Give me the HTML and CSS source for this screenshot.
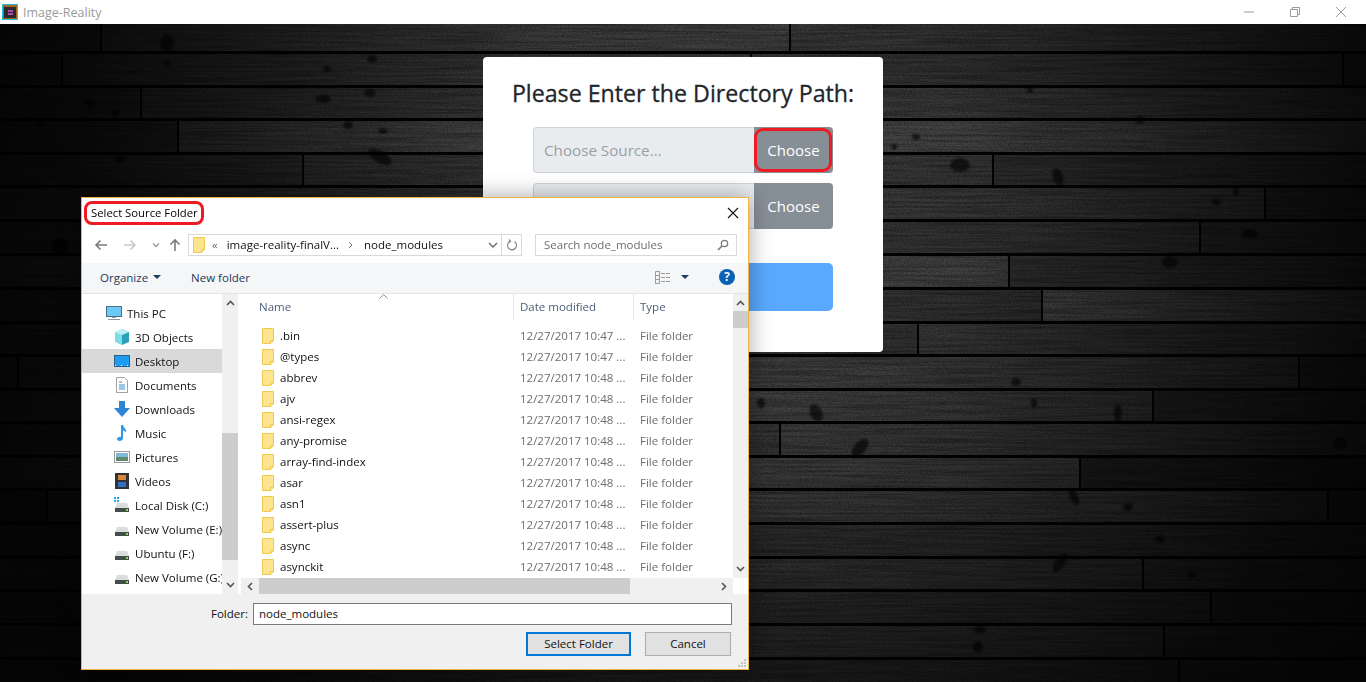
FILE: index.html

```html
<!DOCTYPE html>
<html lang="en">

<head>
    <meta charset="UTF-8">
    <title>Image-Reality</title>
    <link rel="stylesheet" href="styles.css">
</head>

<body>
    <svg class="sprites" width="0" height="0">
        <symbol id="folder" viewBox="0 0 12 16">
            <path d="M.5 .5H11.5V12.5H8.5V15.5H.5Z" fill="#fde58f" stroke="#efc84e" />
            <path d="M8.5 15.5V12.5H11.5Z" fill="#fff3c4" stroke="#efc84e" />
        </symbol>
        <symbol id="drive" viewBox="0 0 16 16">
            <path d="M3 6H13L15 11H1Z" fill="#d8dcdc" />
            <rect x="1" y="11" width="14" height="4" fill="#454c4c" />
            <rect x="12" y="12" width="2" height="2" fill="#7fe05a" />
        </symbol>
    </svg>

    <header class="titlebar">
        <svg class="app-icon" width="16" height="16" viewBox="0 0 16 16">
            <rect width="16" height="16" fill="#1fc0e0" />
            <rect x="1" y="1" width="14" height="14" fill="#a9641c" />
            <rect x="2" y="3" width="12" height="11" fill="#2a2a30" />
            <path d="M6 7H11M6 10H11" stroke="#ee55d8" stroke-width="1.4" />
        </svg>
        <span class="app-name">Image-Reality</span>
        <div class="win-controls">
            <svg width="12" height="12" viewBox="0 0 12 12">
                <path d="M1 6H11" stroke="#999" />
            </svg>
            <svg width="12" height="12" viewBox="0 0 12 12">
                <path d="M1.5 3.5H8.5V10.5H1.5ZM3.5 3.5V1.5H10.5V8.5H8.5" fill="none" stroke="#999" />
            </svg>
            <svg width="12" height="12" viewBox="0 0 12 12">
                <path d="M1 1L11 11M11 1L1 11" stroke="#999" />
            </svg>
        </div>
    </header>

    <main class="stage">
        <!-- wood floor -->
        <svg class="floor" width="1366" height="658" viewBox="0 0 1366 658">
            <defs>
                <filter id="grain" x="0" y="0" width="100%" height="100%">
                    <feTurbulence type="fractalNoise" baseFrequency="0.012 0.45" numOctaves="4" seed="7" />
                    <feColorMatrix values="0 0 0 0 0  0 0 0 0 0  0 0 0 0 0  1.6 0 0 0 -0.5" />
                </filter>
                <filter id="speck" x="0" y="0" width="100%" height="100%">
                    <feTurbulence type="fractalNoise" baseFrequency="0.7" numOctaves="2" seed="3" />
                    <feColorMatrix values="0 0 0 0 0  0 0 0 0 0  0 0 0 0 0  1.4 0 0 0 -0.5" />
                </filter>
                <filter id="soft" x="-30%" y="-30%" width="160%" height="160%">
                    <feGaussianBlur stdDeviation="1" />
                </filter>
                <radialGradient id="light" gradientUnits="userSpaceOnUse" cx="730" cy="170" r="770">
                    <stop offset="0" stop-color="#000" stop-opacity="0" />
                    <stop offset=".3" stop-color="#000" stop-opacity=".12" />
                    <stop offset=".62" stop-color="#000" stop-opacity=".55" />
                    <stop offset=".85" stop-color="#000" stop-opacity=".82" />
                    <stop offset="1" stop-color="#000" stop-opacity=".9" />
                </radialGradient>
            </defs>
            <rect width="1366" height="658" fill="#040404" />
            <g opacity=".85">
                <rect y="0" width="100" height="27" fill="#484848" />
                <rect x="102" y="0" width="687" height="27" fill="#565656" />
                <rect x="791" y="0" width="575" height="27" fill="#4c4c4c" />
                <rect y="30" width="61" height="31" fill="#404040" />
                <rect x="63" y="30" width="687" height="31" fill="#4e4e4e" />
                <rect x="752" y="30" width="590" height="31" fill="#484848" />
                <rect x="1344" y="30" width="22" height="31" fill="#3c3c3c" />
                <rect y="64" width="140" height="30" fill="#444" />
                <rect x="142" y="64" width="1224" height="30" fill="#505050" />
                <rect y="97" width="177" height="31" fill="#404040" />
                <rect x="179" y="97" width="1187" height="31" fill="#606060" />
                <rect y="131" width="302" height="30" fill="#484848" />
                <rect x="304" y="131" width="688" height="30" fill="#4e4e4e" />
                <rect x="994" y="131" width="372" height="30" fill="#444" />
                <rect y="164" width="1264" height="31" fill="#505050" />
                <rect x="1266" y="164" width="100" height="31" fill="#3c3c3c" />
                <rect y="198" width="1199" height="31" fill="#4a4a4a" />
                <rect x="1201" y="198" width="165" height="31" fill="#404040" />
                <rect y="232" width="1008" height="31" fill="#5c5c5c" />
                <rect x="1010" y="232" width="356" height="31" fill="#484848" />
                <rect y="266" width="1041" height="31" fill="#484848" />
                <rect x="1043" y="266" width="323" height="31" fill="#646464" />
                <rect y="300" width="917" height="30" fill="#484848" />
                <rect x="919" y="300" width="447" height="30" fill="#505050" />
                <rect y="333" width="17" height="31" fill="#505050" />
                <rect x="19" y="333" width="1279" height="31" fill="#565656" />
                <rect x="1300" y="333" width="66" height="31" fill="#404040" />
                <rect y="367" width="1152" height="30" fill="#585858" />
                <rect x="1154" y="367" width="212" height="30" fill="#404040" />
                <rect y="400" width="779" height="31" fill="#505050" />
                <rect x="781" y="400" width="585" height="31" fill="#585858" />
                <rect y="434" width="1079" height="30" fill="#5e5e5e" />
                <rect x="1081" y="434" width="285" height="30" fill="#3a3a3a" />
                <rect y="467" width="46" height="31" fill="#444" />
                <rect x="48" y="467" width="1279" height="31" fill="#5e5e5e" />
                <rect x="1329" y="467" width="37" height="31" fill="#404040" />
                <rect y="501" width="1366" height="31" fill="#505050" />
                <rect y="535" width="1142" height="30" fill="#585858" />
                <rect x="1144" y="535" width="222" height="30" fill="#505050" />
                <rect y="568" width="1210" height="31" fill="#505050" />
                <rect x="1212" y="568" width="154" height="31" fill="#484848" />
                <rect y="602" width="1163" height="31" fill="#565656" />
                <rect x="1165" y="602" width="201" height="31" fill="#4c4c4c" />
                <rect y="636" width="1178" height="22" fill="#4c4c4c" />
                <rect x="1180" y="636" width="186" height="22" fill="#484848" />
            </g>
            <rect width="1366" height="658" filter="url(#grain)" opacity=".4" />
            <rect width="1366" height="658" filter="url(#speck)" opacity=".5" />
            <g fill="#000" opacity=".6" filter="url(#soft)">
                <ellipse cx="167" cy="19" rx="7" ry="9" />
                <ellipse cx="372" cy="35" rx="5" ry="4" />
                <ellipse cx="327" cy="45" rx="4" ry="3" />
                <ellipse cx="167" cy="39" rx="3" ry="3" />
                <ellipse cx="323" cy="75" rx="8" ry="4" />
                <ellipse cx="370" cy="69" rx="6" ry="4" />
                <ellipse cx="90" cy="79" rx="6" ry="4" />
                <ellipse cx="115" cy="89" rx="4" ry="4" />
                <ellipse cx="348" cy="101" rx="5" ry="4" />
                <ellipse cx="383" cy="107" rx="5" ry="3" />
                <ellipse cx="380" cy="133" rx="13" ry="6" transform="rotate(30 380 133)" />
                <ellipse cx="120" cy="135" rx="6" ry="4" />
                <ellipse cx="960" cy="141" rx="10" ry="7" />
                <ellipse cx="1058" cy="153" rx="5" ry="9" transform="rotate(-20 1058 153)" />
                <ellipse cx="916" cy="113" rx="4" ry="3" />
                <ellipse cx="894" cy="123" rx="3" ry="3" />
                <ellipse cx="1030" cy="66" rx="3" ry="3" />
                <ellipse cx="1140" cy="96" rx="4" ry="4" />
                <ellipse cx="1250" cy="210" rx="8" ry="5" />
                <ellipse cx="1216" cy="178" rx="5" ry="3" />
                <ellipse cx="1236" cy="168" rx="3" ry="4" />
                <ellipse cx="1060" cy="539" rx="5" ry="11" transform="rotate(35 1060 539)" />
                <ellipse cx="761" cy="379" rx="4" ry="5" />
                <ellipse cx="816" cy="389" rx="6" ry="9" transform="rotate(-25 816 389)" />
                <ellipse cx="860" cy="424" rx="6" ry="11" transform="rotate(40 860 424)" />
                <ellipse cx="1016" cy="358" rx="5" ry="4" />
                <ellipse cx="1074" cy="473" rx="4" ry="9" transform="rotate(-25 1074 473)" />
                <ellipse cx="1128" cy="483" rx="5" ry="4" />
                <ellipse cx="980" cy="606" rx="6" ry="4" />
                <ellipse cx="978" cy="623" rx="5" ry="6" />
                <ellipse cx="1192" cy="551" rx="5" ry="3" />
                <ellipse cx="1340" cy="419" rx="7" ry="6" />
                <ellipse cx="1118" cy="389" rx="4" ry="9" />
                <ellipse cx="1034" cy="379" rx="3" ry="5" />
                <ellipse cx="1160" cy="515" rx="5" ry="4" />
                <ellipse cx="60" cy="222" rx="8" ry="9" />
                <ellipse cx="42" cy="100" rx="4" ry="3" />
                <ellipse cx="1170" cy="238" rx="8" ry="6" />
            </g>
            <rect width="1366" height="658" fill="url(#light)" />
        </svg>

        <section class="card">
            <h1 class="card-title">Please Enter the Directory Path:</h1>
            <div class="input-group">
                <div class="path-box">Choose Source...</div>
                <div class="choose-btn marked">Choose</div>
            </div>
            <div class="input-group">
                <div class="path-box"></div>
                <div class="choose-btn">Choose</div>
            </div>
            <div class="start-btn"></div>
        </section>

        <section class="dialog">
            <div class="dlg-title">
                <span class="dlg-caption">Select Source Folder</span>
                <svg class="dlg-close" width="12" height="12" viewBox="0 0 12 12">
                    <path d="M1 1L11 11M11 1L1 11" stroke="#111" stroke-width="1.1" />
                </svg>
            </div>

            <div class="dlg-nav">
                <div class="nav-arrows">
                    <svg width="14" height="12" viewBox="0 0 14 12">
                        <path d="M13 6H2M6.5 1.5L2 6L6.5 10.5" fill="none" stroke="#7b7b7b" stroke-width="1.6" />
                    </svg>
                    <svg width="14" height="12" viewBox="0 0 14 12">
                        <path d="M1 6H12M7.5 1.5L12 6L7.5 10.5" fill="none" stroke="#c9c9c9" stroke-width="1.6" />
                    </svg>
                    <svg class="history" width="8" height="6" viewBox="0 0 8 6">
                        <path d="M1 1.5L4 4.5L7 1.5" fill="none" stroke="#9a9a9a" stroke-width="1.3" />
                    </svg>
                    <svg class="up" width="12" height="14" viewBox="0 0 12 14">
                        <path d="M6 13V2M1.5 6.5L6 2L10.5 6.5" fill="none" stroke="#7b7b7b" stroke-width="1.6" />
                    </svg>
                </div>
                <div class="address">
                    <svg class="addr-folder" width="12" height="16"><use href="#folder" /></svg>
                    <span class="addr-more">«</span>
                    <span class="addr-part">image-reality-finalV...</span>
                    <svg class="addr-sep" width="5" height="8" viewBox="0 0 5 8">
                        <path d="M1 1L4 4L1 7" fill="none" stroke="#777" />
                    </svg>
                    <span class="addr-part addr-last">node_modules</span>
                    <svg class="addr-drop" width="10" height="6" viewBox="0 0 10 6">
                        <path d="M1 1L5 5L9 1" fill="none" stroke="#666" stroke-width="1.3" />
                    </svg>
                    <div class="addr-refresh">
                        <svg width="12" height="12" viewBox="0 0 12 12">
                            <path d="M4.2 2.2A4.5 4.5 0 1 0 8.5 2.6M3 .5L4.6 2.4L2.6 3.8" fill="none" stroke="#888" stroke-width="1.2" />
                        </svg>
                    </div>
                </div>
                <div class="search">
                    <span class="search-text">Search node_modules</span>
                    <svg width="12" height="12" viewBox="0 0 12 12">
                        <circle cx="7.5" cy="4.5" r="3.2" fill="none" stroke="#777" stroke-width="1.2" />
                        <path d="M5 7L1 11" stroke="#777" stroke-width="1.6" />
                    </svg>
                </div>
            </div>

            <div class="dlg-tools">
                <span class="tool">Organize<i class="caret"></i></span>
                <span class="tool">New folder</span>
                <svg class="views" width="16" height="13" viewBox="0 0 16 13">
                    <path d="M.5 .5H4.5V12.5H.5ZM.5 4.5H4.5M.5 8.5H4.5" fill="none" stroke="#9a9a9a" />
                    <path d="M6 2.5H16M6 6.5H16M6 10.5H16" stroke="#9a9a9a" stroke-dasharray="4 1" />
                </svg>
                <i class="caret views-caret"></i>
                <span class="help">?</span>
            </div>

            <div class="dlg-panes">
                <nav class="tree">
                    <div class="tree-row top">
                        <svg width="16" height="16" viewBox="0 0 16 16">
                            <rect x=".5" y="1.5" width="15" height="10" fill="#6cc8f5" stroke="#4c6f88" />
                            <path d="M6 12.5H10M2 14.5H14" stroke="#8a97a3" />
                        </svg>
                        This PC
                    </div>
                    <div class="tree-row">
                        <svg width="16" height="16" viewBox="0 0 16 16">
                            <path d="M8 0L15 3V13L8 16Z" fill="#2aa3b8" />
                            <path d="M8 0L1 3V13L8 16Z" fill="#7fdde8" />
                            <path d="M1 3L8 6L15 3L8 0Z" fill="#bdf0f5" />
                        </svg>
                        3D Objects
                    </div>
                    <div class="tree-row selected">
                        <svg width="16" height="16" viewBox="0 0 16 16">
                            <rect x=".5" y="2.5" width="15" height="11" fill="#1e9df0" stroke="#2a5f8a" />
                            <path d="M1 12.5H15" stroke="#fff" stroke-dasharray="1 5" />
                        </svg>
                        Desktop
                    </div>
                    <div class="tree-row">
                        <svg width="16" height="16" viewBox="0 0 16 16">
                            <path d="M2.5 .5H10.5L13.5 3.5V15.5H2.5Z" fill="#fff" stroke="#a2a2a2" />
                            <path d="M5 5H8M5 8H11M5 10H11M5 12H11" stroke="#2f8fd0" />
                        </svg>
                        Documents
                    </div>
                    <div class="tree-row">
                        <svg width="16" height="16" viewBox="0 0 16 16">
                            <path d="M5 0H11V7H16L8 16L0 7H5Z" fill="#2f84d6" />
                        </svg>
                        Downloads
                    </div>
                    <div class="tree-row">
                        <svg width="16" height="16" viewBox="0 0 16 16">
                            <path d="M7 0H9C9.500 3 13 4 12 8C11.500 6.500 10.500 6 9 5.500V13C9 15 7.500 16 5.500 16C4 16 3 15 3 14C3 12.500 5 11.300 7 11.800Z" fill="#2f9be8" />
                        </svg>
                        Music
                    </div>
                    <div class="tree-row">
                        <svg width="16" height="16" viewBox="0 0 16 16">
                            <rect x=".5" y="2.5" width="15" height="11" fill="#fff" stroke="#9a9a9a" />
                            <rect x="2" y="4" width="12" height="4" fill="#7fb8d8" />
                            <rect x="2" y="8" width="12" height="4" fill="#5c8a6a" />
                        </svg>
                        Pictures
                    </div>
                    <div class="tree-row">
                        <svg width="16" height="16" viewBox="0 0 16 16">
                            <rect x="1" y="0" width="14" height="16" fill="#333" />
                            <rect x="4" y="2" width="8" height="5" fill="#d8863c" />
                            <rect x="4" y="9" width="8" height="5" fill="#2f6fc8" />
                        </svg>
                        Videos
                    </div>
                    <div class="tree-row">
                        <svg width="16" height="16" viewBox="0 0 16 16">
                            <use href="#drive" />
                            <path d="M0 0h2v2h-2zM3 0h2v2h-2zM0 3h2v2h-2zM3 3h2v2h-2z" fill="#1fa8e8" />
                        </svg>
                        Local Disk (C:)
                    </div>
                    <div class="tree-row">
                        <svg width="16" height="16"><use href="#drive" /></svg>
                        New Volume (E:)
                    </div>
                    <div class="tree-row">
                        <svg width="16" height="16"><use href="#drive" /></svg>
                        Ubuntu (F:)
                    </div>
                    <div class="tree-row">
                        <svg width="16" height="16"><use href="#drive" /></svg>
                        New Volume (G:)
                    </div>
                </nav>

                <div class="tree-scroll">
                    <svg class="arrow" width="9" height="6" viewBox="0 0 9 6">
                        <path d="M1 5L4.500 1.500L8 5" fill="none" stroke="#555" stroke-width="1.6" />
                    </svg>
                    <div class="tree-track"><div class="tree-thumb"></div></div>
                    <svg class="arrow" width="9" height="6" viewBox="0 0 9 6">
                        <path d="M1 1L4.500 4.500L8 1" fill="none" stroke="#555" stroke-width="1.6" />
                    </svg>
                </div>

                <div class="files">
                    <div class="files-main">
                        <div class="file-head">
                            <span class="col-name">Name</span>
                            <span class="col-date">Date modified</span>
                            <span class="col-type">Type</span>
                            <svg class="sort" width="9" height="5" viewBox="0 0 9 5">
                                <path d="M.5 4.500L4.500 .5L8.500 4.500" fill="none" stroke="#888" />
                            </svg>
                        </div>
                        <div class="file-list">
                            <div class="file-row"><span class="col-name"><svg width="12" height="16"><use href="#folder" /></svg>.bin</span><span class="col-date">12/27/2017 10:47 ...</span><span class="col-type">File folder</span></div>
                            <div class="file-row"><span class="col-name"><svg width="12" height="16"><use href="#folder" /></svg>@types</span><span class="col-date">12/27/2017 10:47 ...</span><span class="col-type">File folder</span></div>
                            <div class="file-row"><span class="col-name"><svg width="12" height="16"><use href="#folder" /></svg>abbrev</span><span class="col-date">12/27/2017 10:48 ...</span><span class="col-type">File folder</span></div>
                            <div class="file-row"><span class="col-name"><svg width="12" height="16"><use href="#folder" /></svg>ajv</span><span class="col-date">12/27/2017 10:48 ...</span><span class="col-type">File folder</span></div>
                            <div class="file-row"><span class="col-name"><svg width="12" height="16"><use href="#folder" /></svg>ansi-regex</span><span class="col-date">12/27/2017 10:48 ...</span><span class="col-type">File folder</span></div>
                            <div class="file-row"><span class="col-name"><svg width="12" height="16"><use href="#folder" /></svg>any-promise</span><span class="col-date">12/27/2017 10:48 ...</span><span class="col-type">File folder</span></div>
                            <div class="file-row"><span class="col-name"><svg width="12" height="16"><use href="#folder" /></svg>array-find-index</span><span class="col-date">12/27/2017 10:48 ...</span><span class="col-type">File folder</span></div>
                            <div class="file-row"><span class="col-name"><svg width="12" height="16"><use href="#folder" /></svg>asar</span><span class="col-date">12/27/2017 10:48 ...</span><span class="col-type">File folder</span></div>
                            <div class="file-row"><span class="col-name"><svg width="12" height="16"><use href="#folder" /></svg>asn1</span><span class="col-date">12/27/2017 10:48 ...</span><span class="col-type">File folder</span></div>
                            <div class="file-row"><span class="col-name"><svg width="12" height="16"><use href="#folder" /></svg>assert-plus</span><span class="col-date">12/27/2017 10:48 ...</span><span class="col-type">File folder</span></div>
                            <div class="file-row"><span class="col-name"><svg width="12" height="16"><use href="#folder" /></svg>async</span><span class="col-date">12/27/2017 10:48 ...</span><span class="col-type">File folder</span></div>
                            <div class="file-row"><span class="col-name"><svg width="12" height="16"><use href="#folder" /></svg>asynckit</span><span class="col-date">12/27/2017 10:48 ...</span><span class="col-type">File folder</span></div>
                        </div>
                    </div>
                    <div class="vscroll">
                        <svg class="arrow" width="9" height="6" viewBox="0 0 9 6">
                            <path d="M1 5L4.500 1.500L8 5" fill="none" stroke="#555" stroke-width="1.6" />
                        </svg>
                        <div class="vtrack"><div class="vthumb"></div></div>
                        <svg class="arrow" width="9" height="6" viewBox="0 0 9 6">
                            <path d="M1 1L4.500 4.500L8 1" fill="none" stroke="#555" stroke-width="1.6" />
                        </svg>
                    </div>
                    <div class="hscroll">
                        <svg class="harrow" width="6" height="9" viewBox="0 0 6 9">
                            <path d="M5 1L1.500 4.500L5 8" fill="none" stroke="#555" stroke-width="1.6" />
                        </svg>
                        <div class="hthumb"></div>
                        <svg class="harrow" width="6" height="9" viewBox="0 0 6 9">
                            <path d="M1 1L4.500 4.500L1 8" fill="none" stroke="#555" stroke-width="1.6" />
                        </svg>
                    </div>
                </div>
            </div>

            <div class="dlg-foot">
                <div class="folder-row">
                    <span class="folder-label">Folder:</span>
                    <div class="folder-input">node_modules</div>
                </div>
                <div class="foot-buttons">
                    <div class="win-btn default">Select Folder</div>
                    <div class="win-btn">Cancel</div>
                </div>
                <svg class="grip" width="10" height="9" viewBox="0 0 10 9">
                    <path d="M7 0h2v2h-2zM4 3h2v2h-2zM7 3h2v2h-2zM1 6h2v2h-2zM4 6h2v2h-2zM7 6h2v2h-2z" fill="#c4c4c4" />
                </svg>
            </div>
        </section>
    </main>
</body>

</html>
```

FILE: styles.css

```css
* {
    margin: 0;
    padding: 0;
    box-sizing: border-box;
}

html,
body {
    height: 100%;
}

body {
    overflow: hidden;
    display: flex;
    flex-direction: column;
    background: #0a0a0a;
    font-family: "Open Sans", "Noto Sans", sans-serif;
}

.sprites {
    position: absolute;
}

/* app window */
.titlebar {
    display: flex;
    align-items: center;
    height: 24px;
    padding-left: 2px;
    background: #fff;
}

.app-name {
    margin-left: 5px;
    font-size: 12.5px;
    color: #9a9a9a;
}

.win-controls {
    display: flex;
    gap: 34px;
    margin-left: auto;
    padding-right: 19px;
}

.stage {
    position: relative;
    flex: 1;
    display: flex;
    justify-content: center;
    align-items: flex-start;
    overflow: hidden;
}

.floor {
    position: absolute;
    left: 0;
    top: 0;
}

/* bootstrap looking card */
.card {
    position: relative;
    display: flex;
    flex-direction: column;
    align-items: center;
    gap: 10px;
    width: 400px;
    height: 295px;
    margin-top: 33px;
    padding-top: 19px;
    background: #fff;
    border-radius: 4px;
}

.card-title {
    height: 41px;
    font-size: 23.2px;
    font-weight: 500;
    line-height: 34px;
    color: #212529;
    white-space: nowrap;
    -webkit-text-stroke: .3px #212529;
}

.input-group {
    display: flex;
    width: 300px;
    height: 46px;
}

.path-box {
    flex: 1;
    padding: 0 10px;
    background: #e9ecef;
    border: 1px solid #ced4da;
    border-right: 0;
    border-radius: 4px 0 0 4px;
    font-size: 15.2px;
    line-height: 44px;
    color: #999fa4;
}

.choose-btn {
    position: relative;
    width: 79px;
    background: #868e96;
    border-radius: 0 4px 4px 0;
    font-size: 15px;
    line-height: 46px;
    text-align: center;
    color: #fff;
}

.marked::after {
    content: "";
    position: absolute;
    left: 0;
    top: 1px;
    box-sizing: border-box;
    width: 78px;
    height: 44px;
    border: 3px solid #ed1c24;
    border-radius: 9px;
}

.start-btn {
    width: 300px;
    height: 48px;
    margin-top: 24px;
    background: #59a9ff;
    border-radius: 5px;
}

/* windows folder picker */
.dialog {
    position: absolute;
    left: 81px;
    top: 173px;
    display: flex;
    flex-direction: column;
    width: 668px;
    height: 473px;
    background: #fff;
    border: 1px solid #f0b43c;
    box-shadow: 0 0 22px rgba(0, 0, 0, .35);
    font-size: 11.5px;
    color: #111;
}

.dlg-title {
    display: flex;
    align-items: center;
    justify-content: space-between;
    height: 34px;
    padding: 0 9px 5px 2px;
}

.dlg-caption {
    padding: 1px 3px 2px 4px;
    border: 3px solid #ed1c24;
    border-radius: 8px;
    font-size: 11.3px;
    color: #000;
}

.dlg-nav {
    display: flex;
    align-items: flex-start;
    height: 31px;
    padding: 2px 11px 0 12px;
}

.nav-arrows {
    display: flex;
    align-items: center;
    gap: 15px;
    width: 94px;
    height: 22px;
}

.up {
    margin-left: -6px;
}

.address {
    display: flex;
    align-items: center;
    width: 334px;
    height: 22px;
    padding-left: 4px;
    border: 1px solid #d9d9d9;
    color: #111;
}

.addr-more {
    margin-left: 7px;
    padding-bottom: 1px;
    color: #666;
}

.addr-part {
    margin-left: 9px;
    padding-bottom: 2px;
}

.addr-sep {
    margin-left: 9px;
}

.addr-last {
    margin-left: 11px;
}

.addr-drop {
    margin-left: auto;
    margin-right: 3px;
}

.addr-refresh {
    display: flex;
    align-items: center;
    justify-content: center;
    width: 20px;
    height: 20px;
    border-left: 1px solid #d9d9d9;
}

.search {
    display: flex;
    align-items: center;
    justify-content: space-between;
    width: 202px;
    height: 22px;
    margin-left: 13px;
    padding: 0 7px 0 8px;
    border: 1px solid #d9d9d9;
    color: #6d6d6d;
}

.search-text {
    padding-bottom: 2px;
}

.dlg-tools {
    display: flex;
    align-items: center;
    height: 31px;
    padding: 0 0 2px 18px;
    background: #f5f6f7;
    border-bottom: 1px solid #e5e5e5;
    color: #1e395b;
}

.tool {
    display: flex;
    align-items: center;
    margin-right: 30px;
}

.caret {
    width: 0;
    height: 0;
    margin-left: 5px;
    border: 4px solid transparent;
    border-top: 4px solid #1e395b;
    border-bottom: 0;
}

.views {
    margin-left: 375px;
}

.views-caret {
    margin-left: 10px;
}

.help {
    width: 16px;
    height: 16px;
    margin-left: 30px;
    border-radius: 50%;
    background: #0b62b5;
    font-size: 12px;
    font-weight: 700;
    line-height: 16px;
    text-align: center;
    color: #fff;
}

.dlg-panes {
    display: flex;
    height: 300px;
    overflow: hidden;
}

.tree {
    width: 140px;
    flex: none;
    padding-top: 7px;
    overflow: hidden;
}

.tree-row {
    display: flex;
    align-items: center;
    gap: 5px;
    height: 24px;
    padding-left: 32px;
    white-space: nowrap;
}

.tree-row.top {
    padding-left: 24px;
}

.tree-row.selected {
    background: #d9d9d9;
}

.tree-row svg {
    flex: none;
}

.tree-scroll,
.vscroll {
    display: flex;
    flex-direction: column;
    align-items: center;
    background: #f0f0f0;
}

.tree-scroll {
    width: 16px;
    flex: none;
    padding: 6px 0;
}

.tree-track {
    flex: 1;
    width: 100%;
    padding-top: 127px;
}

.tree-thumb {
    height: 127px;
    background: #cdcdcd;
}

.arrow {
    flex: none;
}

.files {
    flex: 1;
    display: grid;
    grid-template-columns: 492px 15px;
    grid-template-rows: 284px 16px;
    margin-left: 3px;
}

.files-main {
    overflow: hidden;
}

.file-head {
    position: relative;
    display: grid;
    grid-template-columns: 272px 120px 1fr;
    height: 26px;
    line-height: 26px;
    color: #4c607a;
}

.file-head span {
    height: 26px;
}

.file-head .col-name {
    padding-left: 18px;
}

.file-head .col-date,
.file-head .col-type {
    border-left: 1px solid #e5e5e5;
}

.col-date,
.col-type {
    padding-left: 6px;
    white-space: nowrap;
}

.sort {
    position: absolute;
    left: 138px;
    top: 0;
}

.file-list {
    padding-top: 5px;
}

.file-row {
    display: grid;
    grid-template-columns: 272px 120px 1fr;
    height: 21px;
    line-height: 21px;
    color: #6d6d6d;
}

.file-row .col-name {
    display: flex;
    align-items: center;
    gap: 6px;
    padding-left: 21px;
    color: #111;
}

.file-row .col-date,
.file-row .col-type {
    padding-left: 7px;
}

.vscroll {
    padding: 6px 0;
}

.vtrack {
    flex: 1;
    width: 100%;
    padding-top: 5px;
}

.vthumb {
    height: 17px;
    background: #cdcdcd;
}

.hscroll {
    grid-column: 1;
    display: flex;
    align-items: center;
    justify-content: space-between;
    padding: 0 6px;
    background: #f0f0f0;
}

.hthumb {
    width: 371px;
    height: 16px;
    margin-right: auto;
    margin-left: 6px;
    background: #cdcdcd;
}

.dlg-foot {
    position: relative;
    flex: 1;
    background: #f0f0f0;
    padding: 9px 16px 0 0;
}

.folder-row {
    display: flex;
    align-items: center;
}

.folder-label {
    width: 166px;
    padding-bottom: 2px;
    text-align: right;
}

.folder-input {
    width: 479px;
    height: 22px;
    margin-left: 5px;
    padding-left: 5px;
    background: #fff;
    border: 1px solid #7a7a7a;
    line-height: 20px;
}

.foot-buttons {
    display: flex;
    justify-content: flex-end;
    gap: 14px;
    margin: 7px 1px 0 0;
}

.win-btn {
    width: 86px;
    height: 24px;
    background: #e1e1e1;
    border: 1px solid #adadad;
    line-height: 22px;
    text-align: center;
}

.win-btn.default {
    width: 105px;
    border: 2px solid #0078d7;
    line-height: 20px;
}

.grip {
    position: absolute;
    right: 1px;
    bottom: 1px;
}
```
